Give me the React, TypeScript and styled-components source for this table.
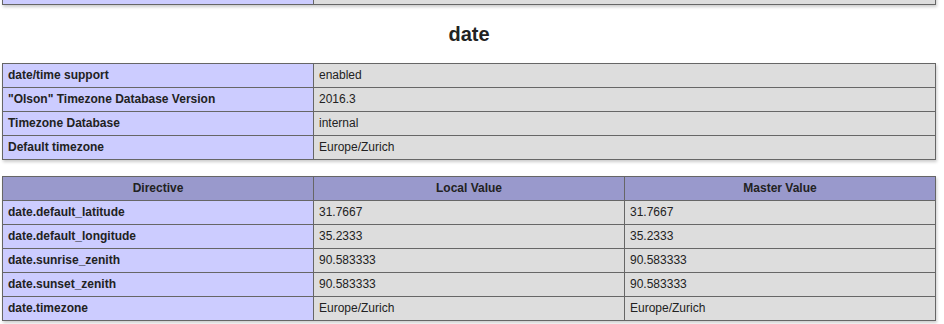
import React from "react";
import styled, { createGlobalStyle } from "styled-components";

const GlobalStyle = createGlobalStyle`
  html, body {
    margin: 0;
    padding: 0;
    background: #fff;
    color: #222;
    font-family: "Liberation Sans", Arial, sans-serif;
  }
  body {
    overflow: hidden;
  }
`;

const Page = styled.div`
  width: 934px;
  padding-left: 2px;
`;

const InfoTable = styled.table<{ $top?: boolean }>`
  border-collapse: collapse;
  border: 0;
  width: 934px;
  box-shadow: 1px 2px 3px #ccc;
  margin: ${(p) => (p.$top ? "-20px 0 0 0" : "0 0 16px 0")};
  text-align: left;
`;

const cellBase = `
  border: 1px solid #666;
  font-size: 12px;
  line-height: 15px;
  padding: 4px 5px;
  vertical-align: baseline;
  color: #222;
`;

const KeyCell = styled.td`
  ${cellBase}
  background-color: #ccf;
  width: 300px;
  font-weight: bold;
`;

const ValueCell = styled.td<{ $wide?: boolean }>`
  ${cellBase}
  background-color: #ddd;
  width: ${(p) => (p.$wide ? "611px" : "300px")};
`;

const HeadCell = styled.th`
  ${cellBase}
  background-color: #99c;
  font-weight: bold;
  text-align: center;
  width: 300px;
`;

const SectionTitle = styled.h2`
  font-size: 20px;
  line-height: 23px;
  font-weight: bold;
  text-align: center;
  margin: 18px 0 17px 0;
  color: #222;
`;

const info: [string, string][] = [
  ["date/time support", "enabled"],
  ['"Olson" Timezone Database Version', "2016.3"],
  ["Timezone Database", "internal"],
  ["Default timezone", "Europe/Zurich"],
];

const directives: [string, string, string][] = [
  ["date.default_latitude", "31.7667", "31.7667"],
  ["date.default_longitude", "35.2333", "35.2333"],
  ["date.sunrise_zenith", "90.583333", "90.583333"],
  ["date.sunset_zenith", "90.583333", "90.583333"],
  ["date.timezone", "Europe/Zurich", "Europe/Zurich"],
];

export default function App() {
  return (
    <>
      <GlobalStyle />
      <Page>
        {/* tail of the previous module's table, scrolled mostly out of view */}
        <InfoTable $top>
          <tbody>
            <tr>
              <KeyCell>{"\u00a0"}</KeyCell>
              <ValueCell $wide>{"\u00a0"}</ValueCell>
            </tr>
          </tbody>
        </InfoTable>

        <SectionTitle>date</SectionTitle>

        <InfoTable>
          <tbody>
            {info.map(([k, v]) => (
              <tr key={k}>
                <KeyCell>{k}</KeyCell>
                <ValueCell $wide>{v}</ValueCell>
              </tr>
            ))}
          </tbody>
        </InfoTable>

        <InfoTable>
          <tbody>
            <tr>
              <HeadCell>Directive</HeadCell>
              <HeadCell>Local Value</HeadCell>
              <HeadCell>Master Value</HeadCell>
            </tr>
            {directives.map(([k, local, master]) => (
              <tr key={k}>
                <KeyCell>{k}</KeyCell>
                <ValueCell>{local}</ValueCell>
                <ValueCell>{master}</ValueCell>
              </tr>
            ))}
          </tbody>
        </InfoTable>
      </Page>
    </>
  );
}
